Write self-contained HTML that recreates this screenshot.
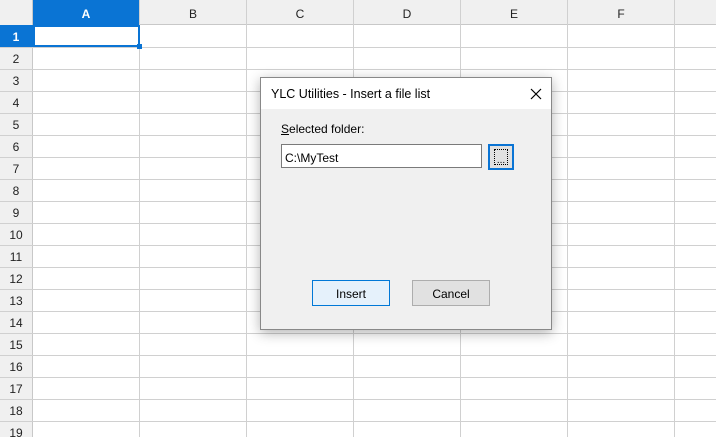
<!DOCTYPE html><html><head><style>
body{margin:0;width:716px;height:437px;overflow:hidden;background:#fff;font-family:"Liberation Sans",sans-serif;position:relative}
.a{position:absolute;box-sizing:border-box}
</style></head><body>
<div class="a" style="left:0;top:0;width:716px;height:25px;background:#f0f0f0;border-bottom:1px solid #c8c8c8"></div>
<div class="a" style="left:0;top:0;width:33px;height:437px;background:#f0f0f0;border-right:1px solid #c8c8c8"></div>
<svg class="a" style="left:0;top:0" width="716" height="437">
<g stroke="#d0d0d0" stroke-width="1">
<line x1="139.5" y1="0" x2="139.5" y2="437"/><line x1="246.5" y1="0" x2="246.5" y2="437"/><line x1="353.5" y1="0" x2="353.5" y2="437"/><line x1="460.5" y1="0" x2="460.5" y2="437"/><line x1="567.5" y1="0" x2="567.5" y2="437"/><line x1="674.5" y1="0" x2="674.5" y2="437"/>
<line x1="0" y1="47.5" x2="716" y2="47.5"/><line x1="0" y1="69.5" x2="716" y2="69.5"/><line x1="0" y1="91.5" x2="716" y2="91.5"/><line x1="0" y1="113.5" x2="716" y2="113.5"/><line x1="0" y1="135.5" x2="716" y2="135.5"/><line x1="0" y1="157.5" x2="716" y2="157.5"/><line x1="0" y1="179.5" x2="716" y2="179.5"/><line x1="0" y1="201.5" x2="716" y2="201.5"/><line x1="0" y1="223.5" x2="716" y2="223.5"/><line x1="0" y1="245.5" x2="716" y2="245.5"/><line x1="0" y1="267.5" x2="716" y2="267.5"/><line x1="0" y1="289.5" x2="716" y2="289.5"/><line x1="0" y1="311.5" x2="716" y2="311.5"/><line x1="0" y1="333.5" x2="716" y2="333.5"/><line x1="0" y1="355.5" x2="716" y2="355.5"/><line x1="0" y1="377.5" x2="716" y2="377.5"/><line x1="0" y1="399.5" x2="716" y2="399.5"/><line x1="0" y1="421.5" x2="716" y2="421.5"/>
</g>
<rect x="33" y="0" width="106" height="25" fill="#0a74d4"/>
<rect x="0" y="25" width="33" height="22" fill="#0a74d4"/>
<rect x="34" y="26" width="105" height="20" fill="none" stroke="#0a74d4" stroke-width="2"/>
<rect x="137" y="44" width="5" height="5" fill="#0a74d4"/>
<g font-family="Liberation Sans" font-size="12" text-anchor="middle" fill="#222">
<text x="86" y="18" fill="#fff" font-weight="bold">A</text><text x="193" y="18">B</text><text x="300" y="18">C</text><text x="407" y="18">D</text><text x="514" y="18">E</text><text x="621" y="18">F</text>
<text x="16" y="41" fill="#fff" font-weight="bold">1</text><text x="16" y="63">2</text><text x="16" y="85">3</text><text x="16" y="107">4</text><text x="16" y="129">5</text><text x="16" y="151">6</text><text x="16" y="173">7</text><text x="16" y="195">8</text><text x="16" y="217">9</text><text x="16" y="239">10</text><text x="16" y="261">11</text><text x="16" y="283">12</text><text x="16" y="305">13</text><text x="16" y="327">14</text><text x="16" y="349">15</text><text x="16" y="371">16</text><text x="16" y="393">17</text><text x="16" y="415">18</text><text x="16" y="437">19</text>
</g></svg>
<div class="a" style="left:260px;top:77px;width:292px;height:253px;background:#f0f0f0;border:1px solid #888;box-shadow:0 3px 12px rgba(0,0,0,.3)">
<div class="a" style="left:0;top:0;width:290px;height:31px;background:#fff;font-size:12.5px;padding:9px 0 0 10px;color:#000">YLC Utilities - Insert a file list</div>
<svg class="a" style="left:269px;top:10px" width="12" height="12"><path d="M1 1L11 11M11 1L1 11" stroke="#000" stroke-width="1.2"/></svg>
<div class="a" style="left:20px;top:44px;font-size:12px;color:#000"><u>S</u>elected folder:</div>
<div class="a" style="left:20px;top:66px;width:201px;height:24px;background:#fff;border:1px solid #7a7a7a;font-size:12px;padding:6px 0 0 3px">C:\MyTest</div>
<div class="a" style="left:227px;top:66px;width:26px;height:26px;background:#e1e1e1;border:2px solid #0a74d4"><div class="a" style="left:4px;top:3px;width:14px;height:16px;border:1px dotted #000;font-size:10px;text-align:center;line-height:22px">...</div></div>
<div class="a" style="left:51px;top:202px;width:78px;height:26px;background:#e5f1fb;border:1px solid #0078d7;font-size:12px;text-align:center;line-height:26px">Insert</div>
<div class="a" style="left:151px;top:202px;width:78px;height:26px;background:#e1e1e1;border:1px solid #adadad;font-size:12px;text-align:center;line-height:26px">Cancel</div>
</div>
</body></html>
